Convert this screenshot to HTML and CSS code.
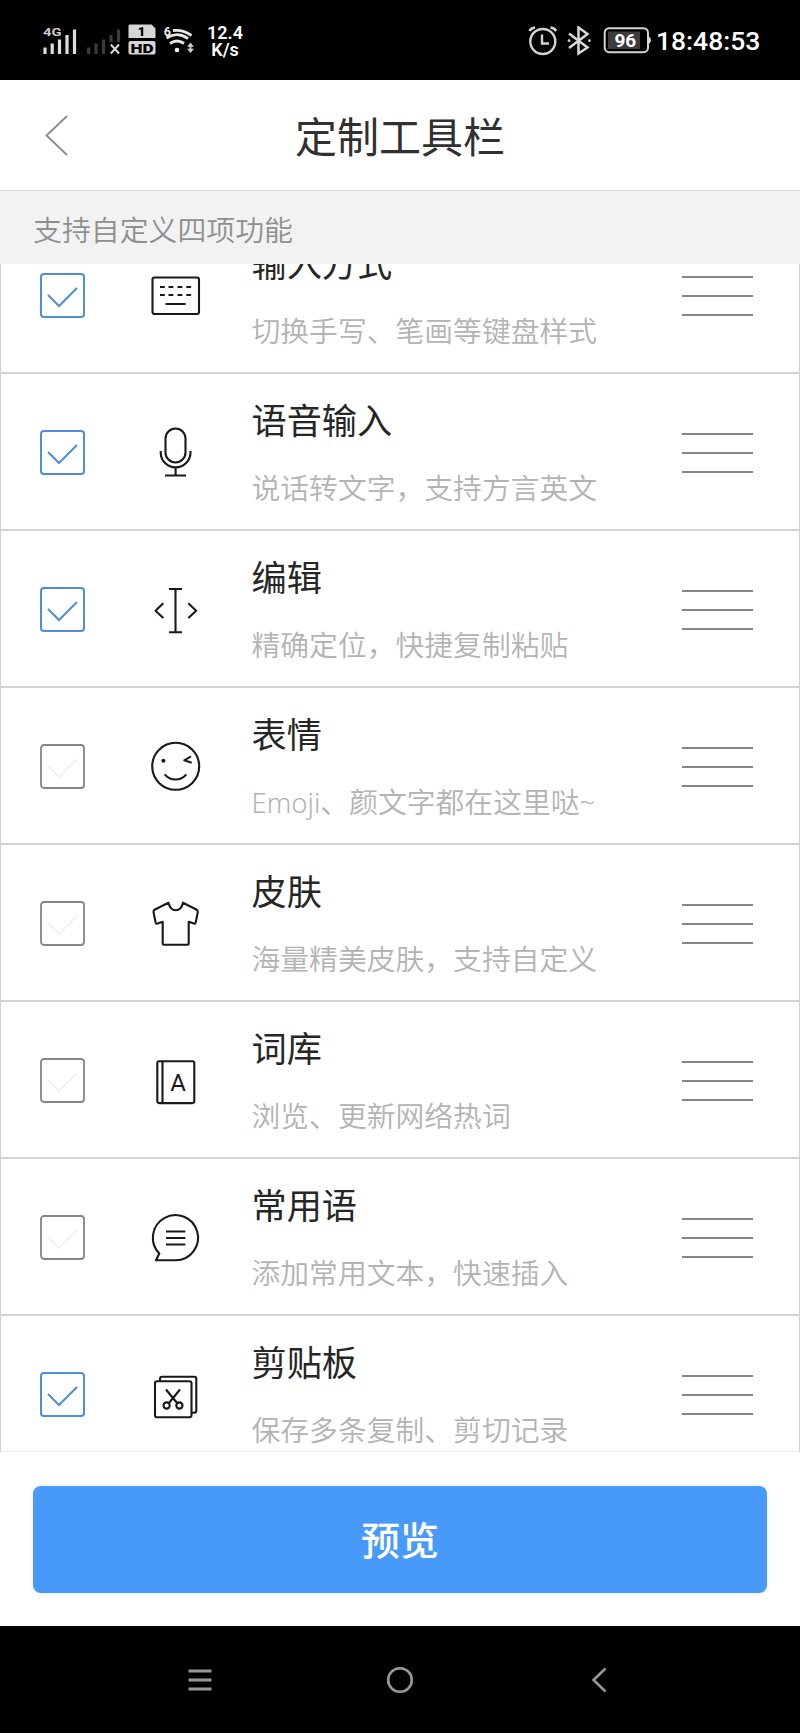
FILE: index.html
```html
<!DOCTYPE html>
<html lang="zh-CN">
<head>
<meta charset="utf-8">
<title>定制工具栏</title>
<link rel="stylesheet" href="styles.css">
</head>
<body>
<div class="screen">
  <div class="status">
    <div class="status-left">
      <svg class="s-signal" width="38" height="32" viewBox="41 24 38 32">
        <text x="43" y="35.500" class="t-4g" textLength="18.500" lengthAdjust="spacingAndGlyphs">4G</text>
        <path d="M45 47.500V54M52.200 43.500V54M59.500 39.500V54M67 35V54M74.500 29.500V54" stroke="#dedede" stroke-width="3.200"/>
      </svg>
      <svg class="s-signal2" width="36" height="32" viewBox="86 24 36 32">
        <path d="M88.700 47.500V54M96 43.500V54M103.500 39.500V54M111 35V42M118.500 29.500V42" stroke="#3c3c3c" stroke-width="3.200"/>
        <path d="M110.800 44.500L119 53.500M119 44.500L110.800 53.500" stroke="#d8d8d8" stroke-width="2"/>
      </svg>
      <svg class="s-hd" width="28" height="32" viewBox="128 24 28 32">
        <path d="M130 24.500H151.500L155.500 28.500V38H128.500V26Q128.500 24.500 130 24.500Z" fill="#d6d6d6"/>
        <rect x="128.500" y="41" width="27" height="13.500" rx="2" fill="#d6d6d6"/>
        <text x="141.500" y="36.300" class="t-hd" text-anchor="middle">1</text>
        <text x="130.500" y="52.700" class="t-hd" textLength="23" lengthAdjust="spacingAndGlyphs">HD</text>
      </svg>
      <svg class="s-wifi" width="32" height="32" viewBox="163 24 32 32">
        <text x="163.800" y="35.500" class="t-six">6</text>
        <g fill="none" stroke="#e8e8e8" stroke-width="2.800">
          <path d="M173 30.500Q183 29.300 191.500 35.500"/>
          <path d="M166.500 38Q177.500 31 188 38.500"/>
          <path d="M170 43.500Q177 38.500 184 43.500"/>
        </g>
        <circle cx="177" cy="50" r="2.300" fill="#eee"/>
        <path d="M190.500 42.500L194 46.700H187ZM190.500 53L194 48.800H187Z" fill="#ccc"/>
        <path d="M190.500 45V51" stroke="#ccc" stroke-width="2"/>
      </svg>
      <div class="speed"><span>12.4</span><span>K/s</span></div>
    </div>
    <div class="status-right">
      <svg class="s-alarm" width="30" height="30" viewBox="528 26 30 30">
        <g fill="none" stroke="#d4d4d4" stroke-width="2.400">
          <circle cx="542.800" cy="41.500" r="12.500"/>
          <path d="M542 34.500V43.500H549"/>
          <path d="M529.500 31Q531 28 535 27.500M550.500 27.500Q554.500 28 556.200 31" stroke-width="2.600"/>
        </g>
      </svg>
      <svg class="s-bt" width="26" height="30" viewBox="566 26 26 30">
        <path d="M569 33.500L587.500 47.500L578.500 53.500V27.500L587.500 34L569 48" fill="none" stroke="#d8d8d8" stroke-width="2.500"/>
        <circle cx="569" cy="40.700" r="1.400" fill="#ccc"/><circle cx="589.500" cy="40.700" r="1.400" fill="#ccc"/>
      </svg>
      <svg class="s-batt" width="48" height="28" viewBox="603 26 48 28">
        <rect x="604.700" y="28.200" width="43.300" height="24" rx="4.500" fill="none" stroke="#d2d2d2" stroke-width="2"/>
        <rect x="608" y="31.500" width="32" height="17.500" fill="#3c3c3c"/>
        <path d="M649 36.500Q651 38 651 40.300T649 44Z" fill="#d2d2d2"/>
        <text x="625.300" y="47" class="t-batt" text-anchor="middle">96</text>
      </svg>
      <span class="clock">18:48:53</span>
    </div>
  </div>

  <div class="header">
    <svg class="back" width="24" height="42" viewBox="0 0 24 42"><path d="M22 1L1.500 20.500L22 40" fill="none" stroke="#8a8a8a" stroke-width="1.800"/></svg>
    <h1 class="page-title">定制工具栏</h1>
  </div>
  <div class="subhead">支持自定义四项功能</div>

  <div class="list">
    <div class="rows">
      <div class="row on">
        <svg class="check" viewBox="0 0 46 46"><rect x="1" y="1" width="43" height="43" rx="3"/><path d="M8 22L19 33L37 15"/></svg>
        <svg class="icon" viewBox="0 0 52 52"><rect x="2.500" y="8.500" width="46.500" height="36.500" rx="2"/><path d="M10 18h4.800M18.500 18h4.800M27.500 18h4.800M36.300 18h4.800M10 26h4.800M18.500 26h4.800M27.500 26h4.800M36.300 26h4.800M15.500 35H35.700"/></svg>
        <div class="text"><div class="name">输入方式</div><div class="desc">切换手写、笔画等键盘样式</div></div>
        <div class="handle"><i></i><i></i><i></i></div>
      </div>
      <div class="row on">
        <svg class="check" viewBox="0 0 46 46"><rect x="1" y="1" width="43" height="43" rx="3"/><path d="M8 22L19 33L37 15"/></svg>
        <svg class="icon" viewBox="0 0 52 52"><rect x="15.500" y="2.500" width="20" height="34" rx="10"/><path d="M10.700 25V26.500A14.900 14.900 0 0 0 40.500 26.500V25M25.600 41.500V49.500M15 49.500H36"/></svg>
        <div class="text"><div class="name">语音输入</div><div class="desc">说话转文字，支持方言英文</div></div>
        <div class="handle"><i></i><i></i><i></i></div>
      </div>
      <div class="row on">
        <svg class="check" viewBox="0 0 46 46"><rect x="1" y="1" width="43" height="43" rx="3"/><path d="M8 22L19 33L37 15"/></svg>
        <svg class="icon" viewBox="0 0 52 52"><path d="M19 6H32M19 49.200H32M25.500 6V49.200M13.300 20.300L5.500 27.700L13.300 35M38.300 20.300L46.200 27.700L38.300 35"/></svg>
        <div class="text"><div class="name">编辑</div><div class="desc">精确定位，快捷复制粘贴</div></div>
        <div class="handle"><i></i><i></i><i></i></div>
      </div>
      <div class="row">
        <svg class="check" viewBox="0 0 46 46"><rect x="1" y="1" width="43" height="43" rx="3"/><path d="M8 22L19 33L37 15"/></svg>
        <svg class="icon" viewBox="0 0 52 52"><circle cx="25.700" cy="26.300" r="23.500"/><circle class="solid" cx="13.400" cy="20.700" r="2"/><path d="M41 16.300L34.300 20.300L41.700 22.700M14.700 34.300Q19 39.500 25.600 39.500T36.300 34.300"/></svg>
        <div class="text"><div class="name">表情</div><div class="desc"><span class="latin">Emoji</span>、颜文字都在这里哒<span class="latin">~</span></div></div>
        <div class="handle"><i></i><i></i><i></i></div>
      </div>
      <div class="row">
        <svg class="check" viewBox="0 0 46 46"><rect x="1" y="1" width="43" height="43" rx="3"/><path d="M8 22L19 33L37 15"/></svg>
        <svg class="icon" viewBox="0 0 52 52"><path d="M18.500 5.700L5 12.500Q3.200 13.500 3.500 15L5.600 25.500Q6 27 7.500 26.500L12.700 24.800V46.500Q12.700 47.700 14 47.700H37.500Q38.700 47.700 38.700 46.500V24.800L44 26.500Q45.300 27 45.700 25.500L47.800 15Q48 13.500 46.300 12.500L33 5.700C32 10 30 13.200 25.700 13.200S19.500 10 18.500 5.700Z"/></svg>
        <div class="text"><div class="name">皮肤</div><div class="desc">海量精美皮肤，支持自定义</div></div>
        <div class="handle"><i></i><i></i><i></i></div>
      </div>
      <div class="row">
        <svg class="check" viewBox="0 0 46 46"><rect x="1" y="1" width="43" height="43" rx="3"/><path d="M8 22L19 33L37 15"/></svg>
        <svg class="icon" viewBox="0 0 52 52"><rect x="7.300" y="7.300" width="37" height="41.800" rx="2"/><path d="M12.500 7.300V49"/><text x="28.200" y="36.700" class="t-book" text-anchor="middle">A</text></svg>
        <div class="text"><div class="name">词库</div><div class="desc">浏览、更新网络热词</div></div>
        <div class="handle"><i></i><i></i><i></i></div>
      </div>
      <div class="row">
        <svg class="check" viewBox="0 0 46 46"><rect x="1" y="1" width="43" height="43" rx="3"/><path d="M8 22L19 33L37 15"/></svg>
        <svg class="icon" viewBox="0 0 52 52"><path d="M25.700 49.300A22.600 22.600 0 1 0 9.300 42.500L6 49.300Z"/><path d="M16 20.500H35.300M16 27H35.300M16 33.500H35.300"/></svg>
        <div class="text"><div class="name">常用语</div><div class="desc">添加常用文本，快速插入</div></div>
        <div class="handle"><i></i><i></i><i></i></div>
      </div>
      <div class="row on">
        <svg class="check" viewBox="0 0 46 46"><rect x="1" y="1" width="43" height="43" rx="3"/><path d="M8 22L19 33L37 15"/></svg>
        <svg class="icon" viewBox="0 0 52 52"><rect x="5" y="13.300" width="36.500" height="36" rx="2"/><path d="M10 13V10.700Q10 8.700 12 8.700H44.300Q46.300 8.700 46.300 10.700V42.500Q46.300 44.700 44.300 44.700H41.700M16 21.500L27.500 35.500M30 21.500L18.500 35.500"/><circle cx="16.600" cy="37.500" r="3.100"/><circle cx="29.400" cy="37.500" r="3.100"/></svg>
        <div class="text"><div class="name">剪贴板</div><div class="desc">保存多条复制、剪切记录</div></div>
        <div class="handle"><i></i><i></i><i></i></div>
      </div>
    </div>
  </div>

  <div class="footer"><button class="preview">预览</button></div>

  <div class="nav">
    <svg width="26" height="26" viewBox="0 0 26 26"><path d="M1.500 4H24.500M1.500 13H24.500M1.500 22H24.500" stroke="#989898" stroke-width="2.800"/></svg>
    <svg width="28" height="28" viewBox="0 0 28 28"><circle cx="14" cy="14" r="11.800" fill="none" stroke="#989898" stroke-width="2.600"/></svg>
    <svg width="26" height="26" viewBox="0 0 26 26"><path d="M18.500 1.500L6.500 13L18.500 24.500" fill="none" stroke="#989898" stroke-width="2.500"/></svg>
  </div>
</div>
</body>
</html>
```
FILE: styles.css
```css
* { box-sizing: border-box; }
body { margin: 0; background: #fff; font-family: "Noto Sans CJK SC", sans-serif; }
svg { display: block; flex: none; }
.screen { width: 800px; height: 1733px; display: flex; flex-direction: column; overflow: hidden; }

.status { height: 80px; flex: none; background: #000; color: #fff; display: flex; justify-content: space-between; padding: 24px 40px 0 41px; font-family: Roboto, sans-serif; }
.status-left, .status-right { display: flex; align-items: flex-start; }
.s-signal2 { margin-left: 7px; }
.s-hd { margin-left: 6px; }
.s-wifi { margin-left: 7px; }
.speed { margin-left: 12px; width: 36px; display: flex; flex-direction: column; align-items: center; font-size: 18px; line-height: 17px; font-weight: 600; }
.s-alarm, .s-bt, .s-batt { margin-top: 2px; }
.s-bt { margin-left: 8px; }
.s-batt { margin-left: 11px; }
.clock { width: 104px; margin-left: 5px; font-size: 26.500px; line-height: 33px; font-weight: 500; white-space: nowrap; }
.t-4g { font: 700 11.500px Roboto, sans-serif; fill: #ccc; }
.t-hd { font: 900 13px Roboto, sans-serif; fill: #000; }
.t-six { font: 700 12.500px Roboto, sans-serif; fill: #eee; }
.t-batt { font: 700 19px Roboto, sans-serif; fill: #fff; }

.header { height: 110px; flex: none; display: grid; grid-template-columns: 155px 1fr 155px; align-items: center; }
.back { margin: 2px 0 0 45px; }
.page-title { margin: 0; text-align: center; font-size: 42px; line-height: 60px; font-weight: 400; color: #303030; }
.subhead { height: 74px; flex: none; border-top: 1px solid #d8d8d8; background: #f2f2f2; color: #8f8f8f; font-size: 28.900px; line-height: 74px; padding-left: 33px; font-weight: 350; }

.list { height: 1188px; flex: none; overflow: hidden; border: 1px solid #cfcfcf; border-top: 0; border-bottom-color: #eee; }
.rows { margin-top: -49px; }
.row { height: 157px; border-top: 2px solid #d4d4d4; padding: 0 46px 0 39px; display: grid; grid-template-columns: 110px 52px 1fr 71px; align-items: start; }
.check { width: 46px; height: 46px; margin-top: 56px; fill: none; stroke: #858585; stroke-width: 1.800; }
.check path { stroke: #eee; stroke-width: 1.500; }
.on .check, .on .check path { stroke: #4d8ed6; stroke-width: 2; }
.icon { width: 52px; height: 52px; margin-top: 52px; fill: none; stroke: #191919; stroke-width: 2.100; stroke-linejoin: round; }
.solid { fill: #191919; stroke: none; }
.t-book { font: 400 24px Roboto, sans-serif; fill: #191919; stroke: none; }
.text { padding: 19px 0 0 49.500px; white-space: nowrap; }
.name { font-size: 35.200px; line-height: 52px; color: #262626; }
.desc { margin-top: 20px; font-size: 28.800px; line-height: 44px; color: #b3b3b3; font-weight: 350; }
.latin { font-family: "Noto Sans", "Open Sans", sans-serif; font-size: 27.500px; font-weight: 350; line-height: 1; }
.handle { margin-top: 58.500px; display: flex; flex-direction: column; gap: 17px; }
.handle i { height: 2px; background: #858585; }

.footer { height: 174px; flex: none; padding: 34px 33px 0; }
.preview { display: block; width: 734px; height: 107px; border: 0; border-radius: 8px; background: #489af9; color: #fff; font-family: inherit; font-size: 39px; font-weight: 500; line-height: 105px; padding: 0 0 2px; box-shadow: 0 0 4px rgba(0,0,0,.12); }

.nav { flex: 1; background: #000; display: grid; grid-template-columns: repeat(3, 200px); justify-content: center; justify-items: center; align-items: center; }
```
